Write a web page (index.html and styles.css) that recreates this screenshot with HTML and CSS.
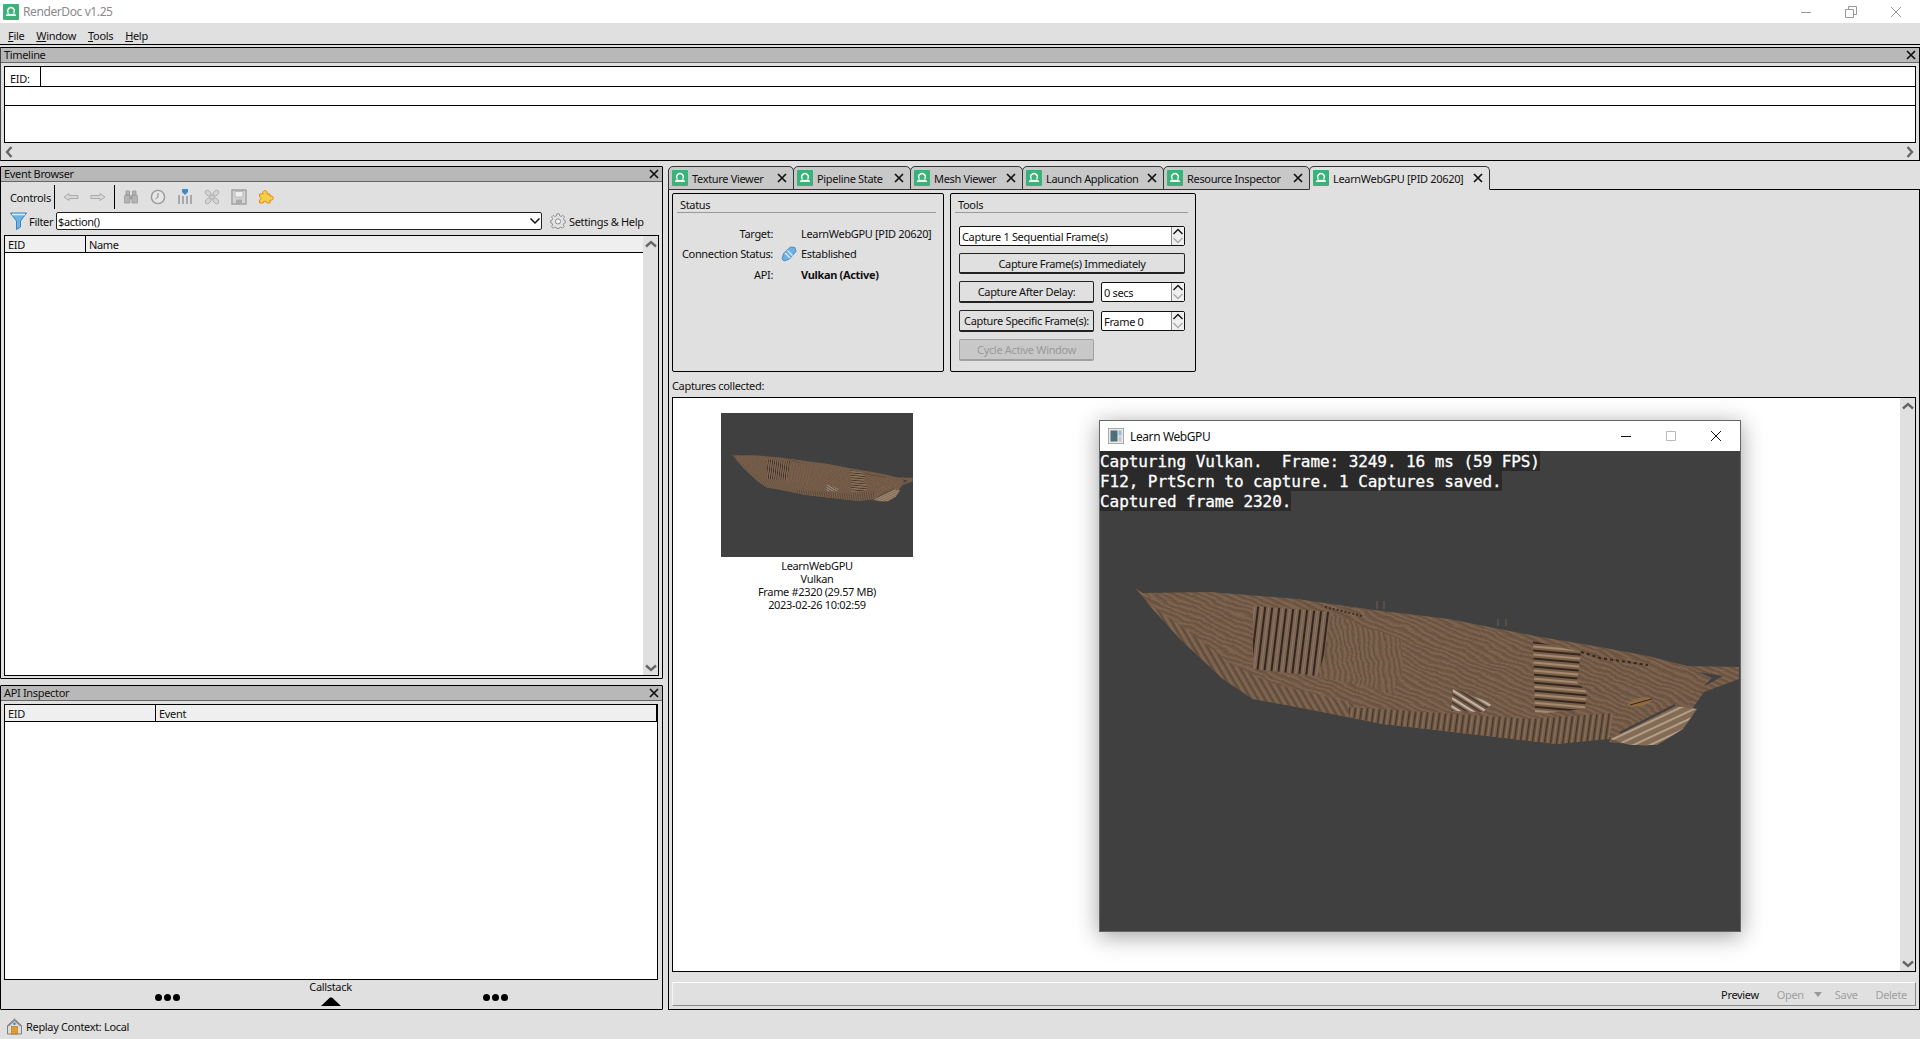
FILE: index.html
```html
<!DOCTYPE html>
<html lang="en">
<head>
<meta charset="utf-8">
<title>RenderDoc v1.25</title>
<link rel="stylesheet" href="styles.css">
</head>
<body>
<svg class="sprite" aria-hidden="true">
  <defs>
    <symbol id="rd" viewBox="0 0 16 16">
      <rect width="16" height="16" rx="1" fill="#3cb27a"/>
      <path d="M5.2 8.6 A3.3 3.3 0 1 1 10.8 8.6" fill="none" stroke="#fff" stroke-width="1.4"/>
      <path d="M5.4 8.8 L4.6 10.4 H11.4 L10.6 8.8" fill="none" stroke="#fff" stroke-width="1"/>
      <path d="M3 11.2 H13" stroke="#fff" stroke-width="1.4"/>
    </symbol>
    <symbol id="x" viewBox="0 0 10 10">
      <path d="M1 1 L9 9 M9 1 L1 9" stroke="#111" stroke-width="1.7" fill="none"/>
    </symbol>
    <symbol id="chev-u" viewBox="0 0 12 8">
      <path d="M1 6.5 L6 2 L11 6.5" stroke="#666" stroke-width="2.4" fill="none"/>
    </symbol>
    <symbol id="chev-d" viewBox="0 0 12 8">
      <path d="M1 1.5 L6 6 L11 1.5" stroke="#666" stroke-width="2.4" fill="none"/>
    </symbol>
    <symbol id="chev-l" viewBox="0 0 8 12">
      <path d="M6.5 1 L2 6 L6.5 11" stroke="#666" stroke-width="2.4" fill="none"/>
    </symbol>
    <symbol id="chev-r" viewBox="0 0 8 12">
      <path d="M1.5 1 L6 6 L1.5 11" stroke="#666" stroke-width="2.4" fill="none"/>
    </symbol>
    <filter id="warp" x="-2%" y="-5%" width="104%" height="110%">
      <feTurbulence type="fractalNoise" baseFrequency=".035 .06" numOctaves="2" seed="4" result="n"/>
      <feDisplacementMap in="SourceGraphic" in2="n" scale="9" xChannelSelector="R" yChannelSelector="G"/>
    </filter>
    <pattern id="wood" width="5" height="5" patternUnits="userSpaceOnUse" patternTransform="rotate(24)">
      <rect width="5" height="5" fill="#755c48"/>
      <rect y="0" width="5" height="1.4" fill="#67503f"/>
      <rect y="3" width="5" height="1" fill="#806854"/>
    </pattern>
    <pattern id="wood2" width="5" height="5" patternUnits="userSpaceOnUse" patternTransform="rotate(-8)">
      <rect width="5" height="5" fill="#755c48"/>
      <rect width="1.2" height="5" fill="#644f3f"/>
      <rect x="2.6" width="1.2" height="5" fill="#806854"/>
    </pattern>
    <pattern id="plank-v" width="7" height="18" patternUnits="userSpaceOnUse" patternTransform="rotate(7)">
      <rect width="7" height="18" fill="#7a6150"/>
      <rect width="2" height="18" fill="#33261d"/>
      <rect x="4" width="1" height="18" fill="#8d7562"/>
    </pattern>
    <pattern id="plank-h" width="20" height="8" patternUnits="userSpaceOnUse" patternTransform="rotate(5)">
      <rect width="20" height="8" fill="#7a5f4a"/>
      <rect width="20" height="2" fill="#33261d"/>
      <rect y="4" width="20" height="2" fill="#a58a70"/>
    </pattern>
    <pattern id="plank-l" width="7" height="7" patternUnits="userSpaceOnUse" patternTransform="rotate(32)">
      <rect width="7" height="7" fill="#6c5846"/>
      <rect y="1" width="7" height="2.4" fill="#c2b3a2"/>
      <rect y="5" width="7" height="1" fill="#3e2e24"/>
    </pattern>
    <pattern id="plank-f" width="7" height="7" patternUnits="userSpaceOnUse" patternTransform="rotate(-25)">
      <rect width="7" height="7" fill="#836b56"/>
      <rect y="1" width="7" height="1.8" fill="#b8a48e"/>
    </pattern>
    <pattern id="rail" width="6" height="20" patternUnits="userSpaceOnUse" patternTransform="rotate(8)">
      <rect width="6" height="20" fill="#755c48"/>
      <rect width="1.6" height="20" fill="#46372b"/>
      <rect x="3" width="1.2" height="20" fill="#85705c"/>
    </pattern>
    <pattern id="rail2" width="6" height="20" patternUnits="userSpaceOnUse" patternTransform="rotate(-30)">
      <rect width="6" height="20" fill="#755c48"/>
      <rect width="1.6" height="20" fill="#5c4939"/>
      <rect x="3" width="1.2" height="20" fill="#826b57"/>
    </pattern>
    <symbol id="boat" viewBox="0 0 640 480">
      <rect width="640" height="480" fill="#404040"/>
      <path d="M277 150V158M284 150V158M398 168V175M406 168V175" stroke="#6d6053" stroke-width="1"/>
      <polygon fill="url(#wood)" points="35,137 43,142 110,141 197,148 266,158 349,168 435,185 500,196 548,205 587,215 639,216 639,228 604,241 578,278 548,295 509,291 511,286 457,293 370,283 283,273 197,256 153,248 123,228 80,188"/>
      <g filter="url(#warp)">
        <polygon fill="url(#wood)" points="45,145 110,145 197,152 266,161 349,172 435,188 500,200 548,209 587,218 630,220 600,238 570,270 500,280 370,275 283,265 197,250 153,240 123,222 85,185"/>
        <polygon fill="url(#wood2)" points="231,161 303,190 301,225 290,241 217,225"/>
      </g>
      <polygon fill="url(#rail2)" points="45,150 85,178 130,212 170,232 249,251 270,262 283,273 197,256 153,248 123,228 80,188"/>
      <polygon fill="url(#plank-v)" points="153,155 231,161 224,205 217,225 153,218"/>
      <polygon fill="url(#plank-h)" points="433,190 481,201 477,231 487,241 485,258 435,263 434,225"/>
      <polygon fill="url(#plank-l)" points="353,237 392,253 383,261 351,260"/>
      <polygon fill="url(#rail)" points="249,256 431,268 513,262 509,288 457,293 370,283 283,273 249,266"/>
      <polygon fill="#404040" points="598,221 623,225 603,236 612,227"/>
      <path d="M520 282 L575 254" stroke="#404040" stroke-width="2.5"/>
      <polygon fill="url(#plank-f)" points="510,288 577,255 597,258 583,278 557,294 530,294"/>
      <path d="M481 201 L500 207 L548 214" stroke="#33261d" stroke-width="2" stroke-dasharray="3 3" fill="none"/>
      <path d="M225 156 L262 165" stroke="#3e3026" stroke-width="2" stroke-dasharray="2 2" fill="none"/>
      <ellipse cx="540" cy="251" rx="12" ry="4" fill="#8f6a47" transform="rotate(-12 540 251)"/>
      <path d="M530 254L552 248" stroke="#33261d" stroke-width="1"/>
    </symbol>
  </defs>
</svg>

<header class="titlebar">
  <svg class="ic-16 title-icon"><use href="#rd"/></svg>
  <span class="title-text">RenderDoc v1.25</span>
  <div class="caption-btns">
    <svg class="cap-btn" viewBox="0 0 12 12"><path d="M1 6.5H11" stroke="#999" stroke-width="1"/></svg>
    <svg class="cap-btn" viewBox="0 0 12 12"><path d="M.5 3.5H8.5V11.5H.5ZM3.5 3.5V.5H11.5V8.5H8.5" stroke="#999" stroke-width="1" fill="none"/></svg>
    <svg class="cap-btn" viewBox="0 0 12 12"><path d="M1 1L11 11M11 1L1 11" stroke="#999" stroke-width="1" fill="none"/></svg>
  </div>
</header>

<nav class="menubar">
  <span><u>F</u>ile</span>
  <span><u>W</u>indow</span>
  <span><u>T</u>ools</span>
  <span><u>H</u>elp</span>
</nav>

<section class="timeline">
  <div class="dock-title"><span>Timeline</span><svg class="ic-10"><use href="#x"/></svg></div>
  <div class="timebox">
    <div class="time-row1"><span class="eid-cell">EID:</span></div>
    <div class="time-row2"></div>
    <div class="time-row3"></div>
  </div>
  <div class="time-scroll">
    <svg class="chev-h"><use href="#chev-l"/></svg>
    <svg class="chev-h"><use href="#chev-r"/></svg>
  </div>
</section>

<main class="main">
  <div class="left-col">
    <section class="dock event-browser">
      <div class="dock-title"><span>Event Browser</span><svg class="ic-10"><use href="#x"/></svg></div>
      <div class="controls">
        <span class="ctl-label">Controls</span>
        <span class="vline"></span>
        <div class="ctl-group">
          <svg class="ic-16" viewBox="0 0 16 16"><path d="M1 8L6 4.5V6.5H15V9.5H6V11.5Z" fill="#d8d8d8" stroke="#aaa"/></svg>
          <svg class="ic-16" viewBox="0 0 16 16"><path d="M15 8L10 4.5V6.5H1V9.5H10V11.5Z" fill="#d8d8d8" stroke="#aaa"/></svg>
        </div>
        <span class="vline"></span>
        <div class="ctl-group">
          <svg class="ic-16" viewBox="0 0 16 16"><path d="M2 6H7V14H1.5V8ZM9 6H14L14.5 8V14H9ZM3 2H6.5V6H3ZM9.5 2H13V6H9.5ZM7 7H9V10H7Z" fill="#b4b4b4" stroke="#999" stroke-width=".8"/></svg>
          <svg class="ic-16" viewBox="0 0 16 16"><circle cx="8" cy="8" r="6.6" fill="#e6e6e6" stroke="#999" stroke-width="1.4"/><path d="M8 4V8L5.5 10" stroke="#888" fill="none"/></svg>
          <svg class="ic-16" viewBox="0 0 16 16"><path d="M5 0H11V3L8 6L5 3Z" fill="#3f88c9"/><path d="M2 6V15M6 7V15M10 7V15M14 6V15" stroke="#a8a8a8" stroke-width="2"/></svg>
          <svg class="ic-16" viewBox="0 0 16 16"><g fill="#d4d4d4" stroke="#aaa" stroke-width=".9"><ellipse cx="4.2" cy="4.2" rx="3.4" ry="2.3" transform="rotate(45 4.2 4.2)"/><ellipse cx="11.8" cy="4.2" rx="3.4" ry="2.3" transform="rotate(-45 11.8 4.2)"/><ellipse cx="4.2" cy="11.8" rx="3.4" ry="2.3" transform="rotate(-45 4.2 11.8)"/><ellipse cx="11.8" cy="11.8" rx="3.4" ry="2.3" transform="rotate(45 11.8 11.8)"/><circle cx="8" cy="8" r="2.2"/></g></svg>
          <svg class="ic-16" viewBox="0 0 16 16"><path d="M1 1H15V15H1Z" fill="#d4d4d4" stroke="#a0a0a0" stroke-width="1.4"/><path d="M4 2.5H12V8H4Z" fill="#eee" stroke="#aaa" stroke-width=".7"/><path d="M5 10.5H11V15H5Z" fill="#aaa"/></svg>
          <svg class="ic-16" viewBox="0 0 16 16"><path d="M1.5 5H5A2.3 2.3 0 1 1 9 5H12V7.2A2.2 2.2 0 1 1 12 11V14H8.8A1.8 1.8 0 0 0 5.2 14H1.5V11A1.6 1.6 0 0 0 1.5 7.8Z" fill="#f6cf4a" stroke="#e08a1e" stroke-width="1"/></svg>
        </div>
      </div>
      <div class="filter-row">
        <svg class="funnel" viewBox="0 0 17 18"><path d="M.5 1H16.5L10.5 9V15L6.5 17.5V9Z" fill="#6cb2e4" stroke="#3a83bd"/><path d="M2 2.5H15" stroke="#d8eefb" stroke-width="1.6"/></svg>
        <span class="filter-label">Filter</span>
        <div class="filter-input">
          <span>$action()</span>
          <svg class="combo-chev" viewBox="0 0 12 8"><path d="M1.5 1.5L6 6L10.5 1.5" stroke="#111" stroke-width="1.5" fill="none"/></svg>
        </div>
        <svg class="gear" viewBox="0 0 16 16"><path d="M6.8 .8H9.2L9.6 2.8L11.3 3.5L13 2.4L14.6 4L13.4 5.7L14.1 7.3L15.3 7.6V9.9L13.9 10.2L13.2 11.9L14.2 13.6L12.6 15.2L10.9 14L9.3 14.7L9 15.6H6.9L6.6 14.7L4.9 14L3.2 15.2L1.6 13.6L2.7 11.9L2 10.2L.7 9.9V7.6L2 7.3L2.7 5.7L1.5 4L3.1 2.4L4.8 3.5L6.4 2.8Z" fill="#e4e4e4" stroke="#888" stroke-width=".9"/><circle cx="8" cy="8.4" r="2.6" fill="#f4f4f4" stroke="#888"/></svg>
        <span>Settings &amp; Help</span>
      </div>
      <div class="tree eb-tree">
        <div class="tree-main">
          <div class="tree-head"><span class="col-eid">EID</span><span class="col-name">Name</span></div>
          <div class="tree-body"></div>
        </div>
        <div class="vscroll">
          <svg class="chev-v"><use href="#chev-u"/></svg>
          <svg class="chev-v"><use href="#chev-d"/></svg>
        </div>
      </div>
    </section>

    <section class="dock api-inspector">
      <div class="dock-title"><span>API Inspector</span><svg class="ic-10"><use href="#x"/></svg></div>
      <div class="tree api-tree">
        <div class="tree-main">
          <div class="tree-head api-head"><span class="col-eid-api">EID</span><span class="col-name">Event</span></div>
          <div class="tree-body"></div>
        </div>
      </div>
      <div class="splitter">
        <div class="dots"><i></i><i></i><i></i></div>
        <div class="callstack">
          <span>Callstack</span>
          <svg class="tri" viewBox="0 0 20 9"><path d="M0 9L9 .5H11L20 9Z" fill="#000"/></svg>
        </div>
        <div class="dots"><i></i><i></i><i></i></div>
      </div>
    </section>
  </div>

  <div class="right-col">
    <div class="tabs">
      <div class="tab"><svg class="ic-16"><use href="#rd"/></svg><span class="tab-label">Texture Viewer</span><svg class="ic-10"><use href="#x"/></svg></div>
      <div class="tab"><svg class="ic-16"><use href="#rd"/></svg><span class="tab-label">Pipeline State</span><svg class="ic-10"><use href="#x"/></svg></div>
      <div class="tab"><svg class="ic-16"><use href="#rd"/></svg><span class="tab-label">Mesh Viewer</span><svg class="ic-10"><use href="#x"/></svg></div>
      <div class="tab"><svg class="ic-16"><use href="#rd"/></svg><span class="tab-label">Launch Application</span><svg class="ic-10"><use href="#x"/></svg></div>
      <div class="tab"><svg class="ic-16"><use href="#rd"/></svg><span class="tab-label">Resource Inspector</span><svg class="ic-10"><use href="#x"/></svg></div>
      <div class="tab active"><svg class="ic-16"><use href="#rd"/></svg><span class="tab-label">LearnWebGPU [PID 20620]</span><svg class="ic-10"><use href="#x"/></svg></div>
    </div>
    <div class="tab-body">
      <div class="groups">
        <section class="group status-group">
          <div class="group-title">Status</div>
          <div class="status-grid">
            <span class="st-label">Target:</span><span></span><span>LearnWebGPU [PID 20620]</span>
            <span class="st-label">Connection Status:</span>
            <svg class="ic-16" viewBox="0 0 16 16"><path d="M3 15L1 13L2.5 7.5L9.5 1L14 1.5L15 5.5L8.5 13Z" fill="#6fb0e3" stroke="#3c7fb8" stroke-width=".8"/><path d="M4 7L9 12M6.5 4.5L11.5 9.5" stroke="#dcefff" stroke-width="1.2"/></svg>
            <span>Established</span>
            <span class="st-label">API:</span><span></span><span class="bold">Vulkan (Active)</span>
          </div>
        </section>
        <section class="group tools-group">
          <div class="group-title">Tools</div>
          <div class="tools-col">
            <div class="spin spin-wide"><span>Capture 1 Sequential Frame(s)</span><div class="spin-arrows"><svg class="spin-up" viewBox="0 0 12 8"><path d="M1.5 6.5L6 2L10.5 6.5" stroke="#111" stroke-width="1.3" fill="none"/></svg><svg class="spin-down" viewBox="0 0 12 8"><path d="M1.5 1.5L6 6L10.5 1.5" stroke="#aaa" stroke-width="1.3" fill="none"/></svg></div></div>
            <button class="btn btn-wide">Capture Frame(s) Immediately</button>
            <div class="tool-row">
              <button class="btn btn-side">Capture After Delay:</button>
              <div class="spin spin-small"><span>0 secs</span><div class="spin-arrows"><svg class="spin-up" viewBox="0 0 12 8"><path d="M1.5 6.5L6 2L10.5 6.5" stroke="#111" stroke-width="1.3" fill="none"/></svg><svg class="spin-down" viewBox="0 0 12 8"><path d="M1.5 1.5L6 6L10.5 1.5" stroke="#aaa" stroke-width="1.3" fill="none"/></svg></div></div>
            </div>
            <div class="tool-row">
              <button class="btn btn-side">Capture Specific Frame(s):</button>
              <div class="spin spin-small"><span>Frame 0</span><div class="spin-arrows"><svg class="spin-up" viewBox="0 0 12 8"><path d="M1.5 6.5L6 2L10.5 6.5" stroke="#111" stroke-width="1.3" fill="none"/></svg><svg class="spin-down" viewBox="0 0 12 8"><path d="M1.5 1.5L6 6L10.5 1.5" stroke="#aaa" stroke-width="1.3" fill="none"/></svg></div></div>
            </div>
            <button class="btn btn-side btn-off">Cycle Active Window</button>
          </div>
        </section>
      </div>
      <div class="captures-label">Captures collected:</div>
      <div class="capture-list">
        <div class="capture-area">
          <figure class="capture-item">
            <svg class="thumb"><use href="#boat"/></svg>
            <figcaption>LearnWebGPU<br>Vulkan<br>Frame #2320 (29.57 MB)<br>2023-02-26 10:02:59</figcaption>
          </figure>
        </div>
        <div class="vscroll">
          <svg class="chev-v"><use href="#chev-u"/></svg>
          <svg class="chev-v"><use href="#chev-d"/></svg>
        </div>
        <article class="app-window">
          <div class="app-title">
            <svg class="ic-16" viewBox="0 0 16 16"><rect x=".5" y=".5" width="15" height="15" fill="#e8e8e8" stroke="#aaa"/><rect x="2.5" y="2.5" width="7" height="11" fill="#4f6f78"/><rect x="10.5" y="2.5" width="3" height="5" fill="#8fc0d8"/><rect x="10.5" y="8.5" width="3" height="5" fill="#c8c8c8"/></svg>
            <span class="app-name">Learn WebGPU</span>
            <div class="app-btns">
              <svg class="cap-btn" viewBox="0 0 12 12"><path d="M1 6.5H11" stroke="#111" stroke-width="1"/></svg>
              <svg class="cap-btn" viewBox="0 0 12 12"><path d="M1.5 1.5H10.5V10.5H1.5Z" stroke="#bbb" stroke-width="1" fill="none"/></svg>
              <svg class="cap-btn" viewBox="0 0 12 12"><path d="M1 1L11 11M11 1L1 11" stroke="#111" stroke-width="1" fill="none"/></svg>
            </div>
          </div>
          <div class="app-client">
            <svg class="app-scene"><use href="#boat"/></svg>
            <div class="overlay">
              <span>Capturing Vulkan.  Frame: 3249. 16 ms (59 FPS)</span>
              <span>F12, PrtScrn to capture. 1 Captures saved.</span>
              <span>Captured frame 2320.</span>
            </div>
          </div>
        </article>
      </div>
      <div class="list-toolbar">
        <span class="tb-item">Preview</span>
        <span class="tb-item off tb-open">Open</span>
        <svg class="tb-arrow" viewBox="0 0 8 5"><path d="M0 0H8L4 5Z" fill="#999"/></svg>
        <span class="tb-item off">Save</span>
        <span class="tb-item off">Delete</span>
      </div>
    </div>
  </div>
</main>

<footer class="statusbar">
  <svg class="ic-16 house" viewBox="0 0 16 18"><path d="M8 1L15.5 8V17H.5V8Z" fill="#ddd" stroke="#777"/><path d="M8 1L15.5 8L14 9L8 3.5L2 9L.5 8Z" fill="#8f8f8f"/><circle cx="8" cy="6" r="1.4" fill="#3f88c9"/><rect x="5" y="9" width="6" height="8" fill="#e39a2e" stroke="#a96a18" stroke-width=".6"/></svg>
  <span>Replay Context: Local</span>
</footer>
</body>
</html>
```
FILE: styles.css
```css
* { box-sizing: border-box; }
html, body { margin: 0; padding: 0; }
body {
  width: 1920px;
  height: 1039px;
  overflow: hidden;
  display: flex;
  flex-direction: column;
  background: #e0e0e0;
  color: #111;
  font-family: "Noto Sans", "Liberation Sans", sans-serif;
  font-size: 11px;
  letter-spacing: -.33px;
  line-height: 13px;
}
svg { display: block; flex: none; }
.sprite { width: 0; height: 0; }
.ic-16 { width: 16px; height: 16px; }
.ic-10 { width: 10px; height: 10px; }

.titlebar {
  height: 23px;
  background: #fff;
  display: flex;
  align-items: center;
  padding-left: 3px;
}
.title-text { margin-left: 4px; color: #8a8a8a; font-size: 12px; letter-spacing: -.4px; }
.caption-btns { margin-left: auto; display: flex; gap: 33px; padding-right: 18px; }
.cap-btn { width: 12px; height: 12px; }

.menubar {
  height: 22px;
  display: flex;
  align-items: center;
  gap: 12px;
  padding: 3px 0 0 8px;
  border-bottom: 1px solid #000;
}

.timeline {
  height: 114px;
  margin-top: 2px;
  border-top: 1px solid #000;
  border-bottom: 1px solid #000;
  border-right: 1px solid #000;
  border-left: 1px solid #444;
}
.dock-title {
  height: 15px;
  background: #b8b8b8;
  border-bottom: 1px solid #666;
  display: flex;
  align-items: center;
  justify-content: space-between;
  padding: 0 3px 1px 3px;
}
.timebox {
  margin: 3px 3px 0 3px;
  height: 77px;
  background: #fff;
  border: 1px solid #000;
}
.time-row1 { height: 20px; border-bottom: 1px solid #000; display: flex; }
.eid-cell { width: 36px; border-right: 1px solid #000; padding: 5px 0 0 5px; }
.time-row2 { height: 19px; border-bottom: 1px solid #000; }
.time-row3 { height: 36px; }
.time-scroll {
  height: 17px;
  display: flex;
  align-items: center;
  justify-content: space-between;
  padding: 0 5px 0 4px;
}
.chev-h { width: 8px; height: 12px; }

.main { height: 844px; margin-top: 5px; display: flex; }
.left-col { width: 663px; display: flex; flex-direction: column; gap: 6px; }
.dock { border: 1px solid #000; display: flex; flex-direction: column; border-radius: 1px; }
.event-browser { height: 513px; }
.api-inspector { height: 325px; }

.controls { margin-top: 3px; height: 24px; display: flex; align-items: center; gap: 8px; flex: none; }
.ctl-label { width: 46px; margin-right: -1px; padding-left: 9px; white-space: nowrap; }
.vline { width: 1px; height: 24px; background: #000; }
.ctl-group { display: flex; gap: 11px; }

.filter-row { margin-top: 3px; height: 18px; display: flex; align-items: center; padding-left: 9px; flex: none; }
.funnel { width: 17px; height: 18px; }
.filter-label { margin: 0 4px 0 2px; width: 23px; }
.filter-input {
  width: 486px;
  height: 18px;
  background: #fff;
  border: 1px solid #222;
  border-radius: 2px;
  display: flex;
  align-items: center;
  justify-content: space-between;
  padding: 0 0 0 1px;
  margin-right: 8px;
}
.combo-chev { width: 12px; height: 8px; }
.gear { width: 16px; height: 16px; margin-right: 3px; }

.tree { border: 1px solid #000; display: flex; background: #fff; }
.eb-tree { margin: 5px 3px 2px 3px; flex: 1; min-height: 0; }
.tree-main { flex: 1; display: flex; flex-direction: column; min-width: 0; }
.tree-head {
  height: 17px;
  background: #efefef;
  border-bottom: 1px solid #000;
  display: flex;
  align-items: center;
  flex: none;
}
.col-eid { width: 81px; height: 100%; border-right: 1px solid #000; padding: 2px 0 0 3px; }
.col-eid-api { width: 151px; height: 100%; border-right: 1px solid #000; padding: 2px 0 0 3px; }
.col-name { padding: 2px 0 0 3px; height: 100%; }
.tree-body { flex: 1; background: #fff; }
.vscroll {
  width: 15px;
  background: #e0e0e0;
  display: flex;
  flex-direction: column;
  justify-content: space-between;
  align-items: center;
  padding: 4px 0 3px;
  flex: none;
}
.chev-v { width: 12px; height: 8px; }

.api-tree { margin: 3px 4px 0 3px; flex: 1; min-height: 0; }
.api-head { border-right: 1px solid #000; }
.splitter {
  height: 29px;
  display: flex;
  justify-content: center;
  flex: none;
}
.dots { display: flex; gap: 2px; width: 228px; justify-content: center; padding-top: 14px; }
.dots i { width: 7px; height: 7px; border-radius: 50%; background: #000; }
.callstack { width: 100px; display: flex; flex-direction: column; align-items: center; padding-right: 2px; }
.tri { width: 20px; height: 9px; margin-top: 4px; }

.right-col { width: 1252px; margin-left: 5px; display: flex; flex-direction: column; }
.tabs { height: 24px; display: flex; border-bottom: 1px solid #000; flex: none; }
.tab {
  height: 24px;
  background: #c8c8c8;
  border: 1px solid #333;
  border-radius: 5px 5px 0 0;
  border-left-width: 1px;
  margin-right: -1px;
  display: flex;
  align-items: center;
  padding: 0 6px 0 3px;
  white-space: nowrap;
}
.tab:nth-child(1) { width: 126px; }
.tab:nth-child(2) { width: 118px; }
.tab:nth-child(3) { width: 113px; }
.tab:nth-child(4) { width: 142px; }
.tab:nth-child(5) { width: 147px; }
.tab:nth-child(6) { width: 181px; }
.tab.active { background: #e0e0e0; border-bottom-color: #e0e0e0; }
.tab-label { margin-left: 4px; flex: 1; }

.tab-body {
  flex: 1;
  min-height: 0;
  border: 1px solid #000;
  border-top: none;
  padding: 3px 3px 3px 3px;
  display: flex;
  flex-direction: column;
}
.groups { display: flex; gap: 6px; height: 179px; flex: none; }
.group { border: 1px solid #000; border-radius: 2px; }
.status-group { width: 272px; }
.tools-group { width: 246px; }
.group-title { height: 19px; margin: 0 7px 0 4px; padding: 4px 0 0 3px; border-bottom: 1px solid #999; }
.status-grid {
  margin-top: 10px;
  display: grid;
  grid-template-columns: 100px 28px 1fr;
  grid-auto-rows: 20.5px;
  align-items: center;
}
.status-grid .ic-16 { margin-left: 8px; }
.st-label { text-align: right; white-space: nowrap; }
.bold { font-weight: 700; }

.tools-col { margin: 13px 0 0 8px; width: 226px; display: flex; flex-direction: column; gap: 7px; align-items: flex-start; }
.tool-row { display: flex; align-items: center; gap: 7px; width: 226px; }
.spin {
  height: 20px;
  background: #fff;
  border: 1px solid #111;
  border-radius: 2px;
  display: flex;
  align-items: center;
  justify-content: space-between;
  padding-left: 2px;
  white-space: nowrap;
  flex: none;
}
.spin-wide { width: 226px; }
.spin-small { width: 84px; }
.spin-arrows {
  width: 13px;
  height: 100%;
  background: #efefef;
  border-left: 1px solid #888;
  display: flex;
  flex-direction: column;
}
.spin-up, .spin-down { width: 12px; height: 9px; }
.btn {
  font: inherit;
  letter-spacing: inherit;
  color: inherit;
  background: #e0e0e0;
  border: 1px solid #222;
  border-bottom-width: 2px;
  border-radius: 2px;
  padding: 0;
  white-space: nowrap;
}
.btn-wide { width: 226px; height: 21px; }
.btn-side { width: 135px; height: 22px; }
.btn-off { background: #c8c8c8; border-color: #a0a0a0; color: #9a9a9a; }

.captures-label { margin-top: 7px; height: 19px; }
.capture-list { position: relative; height: 575px; border: 1px solid #000; display: flex; flex: none; background: #fff; }
.capture-area { flex: 1; padding: 15px 0 0 48px; }
.capture-item { width: 192px; margin: 0; }
.thumb { width: 192px; height: 144px; }
figcaption { margin-top: 2px; text-align: center; white-space: nowrap; }

.app-window {
  position: absolute;
  left: 426px;
  top: 22px;
  width: 642px;
  border: 1px solid #666;
  background: #fff;
  box-shadow: 0 4px 22px rgba(0, 0, 0, .38);
}
.app-title { height: 30px; display: flex; align-items: center; padding-left: 8px; }
.app-name { margin-left: 6px; font-size: 12px; letter-spacing: -.4px; }
.app-btns { margin-left: auto; display: flex; gap: 33px; padding-right: 18px; }
.app-client { position: relative; width: 640px; height: 480px; background: #404040; }
.app-scene { width: 640px; height: 480px; }
.overlay {
  position: absolute;
  left: 0;
  top: 0;
  display: flex;
  flex-direction: column;
  align-items: flex-start;
  font-family: "DejaVu Sans Mono", "Liberation Mono", monospace;
  font-size: 16px;
  line-height: 19px;
  letter-spacing: -.07px;
  color: #fff;
  -webkit-text-stroke: .3px #fff;
  white-space: pre;
}
.overlay span { background: #2a2a2a; padding-top: 1px; }

.list-toolbar {
  margin-top: 10px;
  height: 24px;
  flex: none;
  border-top: 1px solid #fff;
  border-left: 1px solid #f4f4f4;
  border-bottom: 1px solid #888;
  border-right: 1px solid #888;
  display: flex;
  align-items: center;
  justify-content: flex-end;
  padding-right: 8px;
}
.tb-item { margin-left: 18px; }
.tb-item.off { color: #a0a0a0; }
.tb-open { margin-right: 10px; }
.tb-arrow { width: 8px; height: 5px; margin-right: -5px; }

.statusbar { height: 29px; display: flex; align-items: center; padding: 3px 0 0 7px; gap: 4px; }
.house { width: 15px; height: 17px; }
```
